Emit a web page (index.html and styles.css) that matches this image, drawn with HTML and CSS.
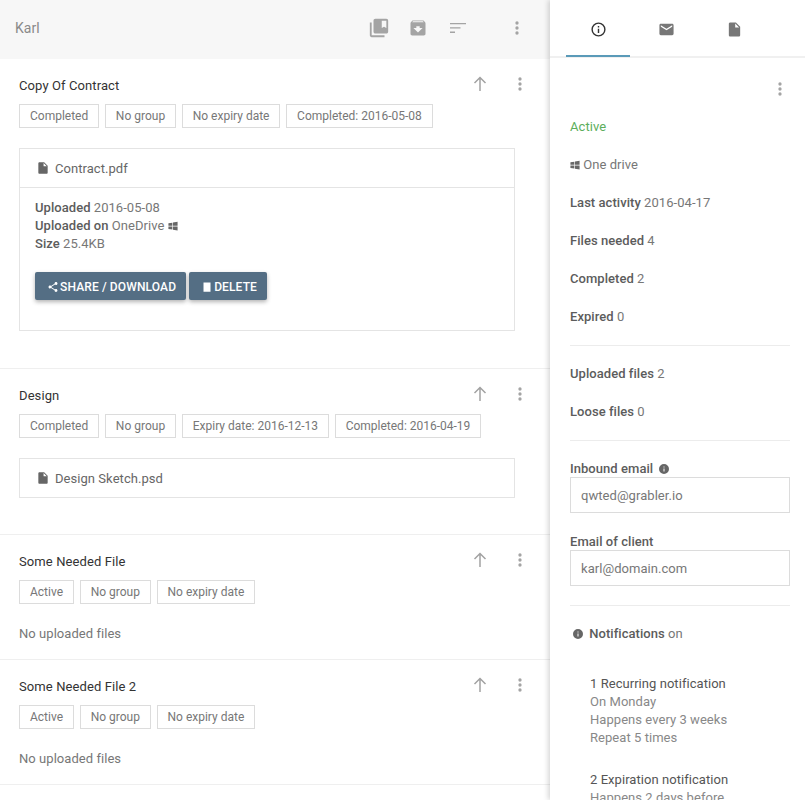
FILE: index.html
```html
<!DOCTYPE html>
<html lang="en">
<head>
<meta charset="utf-8">
<title>Karl</title>
<link rel="stylesheet" href="styles.css">
</head>
<body>
<svg class="sprite" width="0" height="0" aria-hidden="true">
  <symbol id="dots" viewBox="0 0 24 24"><path d="M12 8a2 2 0 1 0 0-4 2 2 0 0 0 0 4zm0 2a2 2 0 1 0 0 4 2 2 0 0 0 0-4zm0 6a2 2 0 1 0 0 4 2 2 0 0 0 0-4z"/></symbol>
  <symbol id="up" viewBox="0 0 20 20"><path d="M10 17V3.500M4.500 9L10 3.500 15.500 9" fill="none" stroke="#a2a2a2" stroke-width="1.500"/></symbol>
  <symbol id="file" viewBox="0 0 24 24"><path d="M6 2c-1.100 0-2 .9-2 2v16c0 1.100.9 2 2 2h12c1.100 0 2-.9 2-2V8l-6-6H6zm7 7V3.500L18.500 9H13z"/></symbol>
  <symbol id="win" viewBox="0 0 24 24"><path d="M1 5.500l9.500-1.500v7.500H1zM12 3.700L23 2v9.500H12zM1 13h9.500v7.500L1 19zM12 13h11v9.500l-11-1.700z"/></symbol>
  <symbol id="info" viewBox="0 0 24 24"><path d="M12 2a10 10 0 1 0 0 20 10 10 0 0 0 0-20zm1 15h-2v-6h2v6zm0-8h-2V7h2v2z"/></symbol>
</svg>

<div class="app">
  <main class="main">
    <header class="topbar">
      <span class="topbar-title">Karl</span>
      <div class="topbar-icons">
        <svg class="ic ic-22" viewBox="0 0 24 24"><path d="M4 6H2v14c0 1.100.9 2 2 2h14v-2H4V6zm16-4H8c-1.100 0-2 .9-2 2v12c0 1.100.9 2 2 2h12c1.100 0 2-.9 2-2V4c0-1.100-.9-2-2-2zm0 10l-2.500-1.500L15 12V4h5v8z"/></svg>
        <svg class="ic ic-20" viewBox="0 0 24 24"><path d="M20.540 5.230l-1.390-1.680C18.880 3.210 18.470 3 18 3H6c-.47 0-.88.21-1.160.55L3.460 5.230C3.170 5.570 3 6.020 3 6.500V19c0 1.100.9 2 2 2h14c1.100 0 2-.9 2-2V6.500c0-.48-.17-.93-.46-1.270zM12 17.500L6.500 12H10v-2h4v2h3.500L12 17.500zM5.120 5l.81-1h12l.94 1H5.120z"/></svg>
        <svg class="ic ic-sort" viewBox="0 0 18 12"><path d="M1 1h16v1.300H1zM1 5.300h10.500v1.300H1zM1 9.600h5v1.300H1z"/></svg>
        <svg class="ic ic-20 topbar-more"><use href="#dots"/></svg>
      </div>
    </header>

    <section class="item item-one">
      <div class="item-head">
        <h2 class="item-title">Copy Of Contract</h2>
        <div class="item-actions">
          <svg class="ic ic-up"><use href="#up"/></svg>
          <svg class="ic ic-20"><use href="#dots"/></svg>
        </div>
      </div>
      <div class="tags">
        <span class="tag">Completed</span>
        <span class="tag">No group</span>
        <span class="tag">No expiry date</span>
        <span class="tag">Completed: 2016-05-08</span>
      </div>
      <div class="card">
        <div class="card-file card-file-open">
          <svg class="ic ic-file"><use href="#file"/></svg>
          <span>Contract.pdf</span>
        </div>
        <div class="card-body">
          <p class="meta"><b>Uploaded</b> 2016-05-08</p>
          <p class="meta"><b>Uploaded on</b> OneDrive <svg class="ic ic-win"><use href="#win"/></svg></p>
          <p class="meta"><b>Size</b> 25.4KB</p>
          <div class="buttons">
            <button class="btn" type="button"><svg class="ic-btn" viewBox="0 0 24 24"><path d="M18 16.080c-.76 0-1.440.3-1.960.77L8.910 12.700c.05-.23.09-.46.09-.7s-.04-.47-.09-.7l7.050-4.110c.54.5 1.250.81 2.040.81 1.660 0 3-1.340 3-3s-1.340-3-3-3-3 1.340-3 3c0 .24.04.47.09.7L8.040 9.810C7.500 9.310 6.790 9 6 9c-1.660 0-3 1.340-3 3s1.340 3 3 3c.79 0 1.500-.31 2.040-.81l7.120 4.160c-.05.21-.08.43-.08.65 0 1.610 1.310 2.920 2.920 2.920s2.920-1.310 2.920-2.920-1.310-2.920-2.920-2.920z"/></svg>SHARE / DOWNLOAD</button>
            <button class="btn" type="button"><svg class="ic-btn" viewBox="0 0 24 24"><path d="M5 3h14v18.500H5z"/></svg>DELETE</button>
          </div>
        </div>
      </div>
    </section>

    <section class="item item-two">
      <div class="item-head">
        <h2 class="item-title">Design</h2>
        <div class="item-actions">
          <svg class="ic ic-up"><use href="#up"/></svg>
          <svg class="ic ic-20"><use href="#dots"/></svg>
        </div>
      </div>
      <div class="tags">
        <span class="tag">Completed</span>
        <span class="tag">No group</span>
        <span class="tag">Expiry date: 2016-12-13</span>
        <span class="tag">Completed: 2016-04-19</span>
      </div>
      <div class="card">
        <div class="card-file">
          <svg class="ic ic-file"><use href="#file"/></svg>
          <span>Design Sketch.psd</span>
        </div>
      </div>
    </section>

    <section class="item item-three">
      <div class="item-head">
        <h2 class="item-title">Some Needed File</h2>
        <div class="item-actions">
          <svg class="ic ic-up"><use href="#up"/></svg>
          <svg class="ic ic-20"><use href="#dots"/></svg>
        </div>
      </div>
      <div class="tags">
        <span class="tag">Active</span>
        <span class="tag">No group</span>
        <span class="tag">No expiry date</span>
      </div>
      <p class="empty">No uploaded files</p>
    </section>

    <section class="item item-three">
      <div class="item-head">
        <h2 class="item-title">Some Needed File 2</h2>
        <div class="item-actions">
          <svg class="ic ic-up"><use href="#up"/></svg>
          <svg class="ic ic-20"><use href="#dots"/></svg>
        </div>
      </div>
      <div class="tags">
        <span class="tag">Active</span>
        <span class="tag">No group</span>
        <span class="tag">No expiry date</span>
      </div>
      <p class="empty">No uploaded files</p>
    </section>
  </main>

  <aside class="side">
    <nav class="tabs">
      <div class="tab tab-active"><svg class="ic-tab" viewBox="0 0 24 24"><path d="M11 7h2v2h-2zm0 4h2v6h-2zm1-9a10 10 0 1 0 0 20 10 10 0 0 0 0-20zm0 18a8 8 0 1 1 0-16 8 8 0 0 1 0 16z"/></svg></div>
      <div class="tab"><svg class="ic-tab ic-muted" viewBox="0 0 24 24"><path d="M20 4H4c-1.100 0-2 .9-2 2v12c0 1.100.9 2 2 2h16c1.100 0 2-.9 2-2V6c0-1.100-.9-2-2-2zm0 4l-8 5-8-5V6l8 5 8-5v2z"/></svg></div>
      <div class="tab"><svg class="ic-tab ic-muted"><use href="#file"/></svg></div>
    </nav>
    <div class="side-more"><svg class="ic ic-20"><use href="#dots"/></svg></div>
    <div class="side-body">
      <div class="group">
        <p class="row row-active">Active</p>
        <p class="row"><svg class="ic ic-win"><use href="#win"/></svg> One drive</p>
        <p class="row"><b>Last activity</b> 2016-04-17</p>
        <p class="row"><b>Files needed</b> 4</p>
        <p class="row"><b>Completed</b> 2</p>
        <p class="row"><b>Expired</b> 0</p>
      </div>
      <div class="group">
        <p class="row"><b>Uploaded files</b> 2</p>
        <p class="row"><b>Loose files</b> 0</p>
      </div>
      <div class="group group-fields">
        <label class="field-label">Inbound email <svg class="ic ic-info"><use href="#info"/></svg></label>
        <div class="field">qwted@grabler.io</div>
        <label class="field-label">Email of client</label>
        <div class="field">karl@domain.com</div>
      </div>
      <div class="notes">
        <p class="notes-head"><svg class="ic ic-info"><use href="#info"/></svg> <b>Notifications</b> on</p>
        <div class="note">
          <p class="note-title">1 Recurring notification</p>
          <p>On Monday</p>
          <p>Happens every 3 weeks</p>
          <p>Repeat 5 times</p>
        </div>
        <div class="note">
          <p class="note-title">2 Expiration notification</p>
          <p>Happens 2 days before</p>
        </div>
      </div>
    </div>
  </aside>
</div>
</body>
</html>
```

FILE: styles.css
```css
* { box-sizing: border-box; }
html, body { margin: 0; padding: 0; height: 800px; overflow: hidden; background: #fff; }
body { font-family: Roboto, "Liberation Sans", sans-serif; font-size: 13px; color: #666; letter-spacing: 0.05px; }
p, h2 { margin: 0; }
b { font-weight: 500; color: #5c5c5c; }
.sprite { position: absolute; }
.ic { fill: #a4a4a4; display: block; flex: none; }
.app { display: flex; height: 800px; }

.main { width: 550px; flex: none; height: 800px; overflow: hidden; }
.topbar { height: 59px; background: #f7f7f7; display: flex; align-items: center; padding: 0 23px 3px 15px; justify-content: space-between; }
.topbar-title { font-size: 14px; color: #8a8a8a; }
.topbar-icons { display: flex; align-items: center; gap: 18px; }
.topbar-more { margin-left: 22px; }
.ic-22 { width: 22px; height: 22px; }
.ic-20 { width: 20px; height: 20px; }
.ic-sort { width: 18px; height: 12px; margin-left: 3px; }

.item { border-bottom: 1px solid #efefef; padding: 16px 35px 0 19px; }
.item-one { height: 310px; }
.item-two { height: 166px; }
.item-three { height: 125px; }
.item-head { display: flex; justify-content: space-between; align-items: flex-start; height: 29px; padding-top: 1px; }
.item-title { font-size: 13px; font-weight: 400; letter-spacing: 0.1px; color: #333; line-height: 20px; }
.item-actions { display: flex; gap: 20px; margin-right: -15px; margin-top: -2px; }
.ic-up { width: 20px; height: 20px; }
.tags { display: flex; gap: 5.600px; }
.tag { height: 24px; line-height: 22px; padding: 0 10px; border: 1px solid #dcdcdc; font-size: 12px; letter-spacing: 0; color: #777; white-space: nowrap; }
.card { border: 1px solid #e4e4e4; margin-top: 20px; }
.card-file { height: 38px; display: flex; align-items: center; gap: 5px; padding-left: 16px; color: #666; }
.card-file-open { height: 39px; border-bottom: 1px solid #e4e4e4; }
.ic-file { width: 14px; height: 14px; fill: #666; }
.card-body { padding: 11px 15px 30px; height: 142px; }
.meta { line-height: 18px; color: #777; }
.ic-win { display: inline-block; width: 10px; height: 10px; fill: #666; vertical-align: -1px; }
.buttons { display: flex; gap: 3px; margin-top: 19px; }
.btn { height: 28px; border: 0; border-radius: 2px; background: #546e84; color: #fff; font: 500 12px Roboto, sans-serif; letter-spacing: 0.13px; padding: 1px 10px 0 12px; display: flex; align-items: center; box-shadow: 0 2px 4px rgba(0,0,0,.3); white-space: nowrap; }
.ic-btn { width: 12px; height: 12px; fill: #fff; margin-right: 1px; }
.empty { margin-top: 21px; line-height: 18px; color: #777; }

.side { width: 255px; flex: none; height: 800px; overflow: hidden; background: #fff; box-shadow: -2px 0 5px rgba(0,0,0,.16); position: relative; }
.tabs { height: 58px; border-bottom: 2px solid #f0f0f0; display: flex; gap: 4px; padding-left: 16px; }
.tab { width: 64px; height: 57px; display: flex; align-items: center; justify-content: center; padding-top: 3px; border-bottom: 2px solid transparent; }
.tab-active { border-bottom-color: #5a9ab8; }
.ic-tab { width: 17px; height: 17px; fill: #333; }
.ic-muted { fill: #777; }
.side-more { display: flex; justify-content: flex-end; padding: 21px 15px 0 0; height: 60px; }
.side-body { padding: 0 15px 0 20px; }
.group { border-bottom: 1px solid #ececec; padding-bottom: 10px; margin-bottom: 19px; }
.row { line-height: 18px; margin-bottom: 20px; color: #777; }
.group .row:last-child { margin-bottom: 9px; }
.row-active { color: #5cae5c; }
.group-fields { padding-bottom: 19px; margin-bottom: 19px; }
.field-label { display: block; font-weight: 500; color: #5c5c5c; line-height: 17px; }
.ic-info { display: inline-block; width: 12px; height: 12px; fill: #666; vertical-align: -2px; margin: 0 2px; }
.field { height: 36px; border: 1px solid #dcdcdc; line-height: 34px; padding: 1px 0 0 10px; margin-bottom: 20px; color: #777; }
.group-fields .field:last-child { margin-bottom: 0; }
.notes-head { line-height: 18px; color: #777; }
.note { padding-left: 20px; line-height: 18px; color: #888; }
.note-title { color: #555; }
.notes-head + .note { margin-top: 32px; }
.note + .note { margin-top: 24px; }
```
